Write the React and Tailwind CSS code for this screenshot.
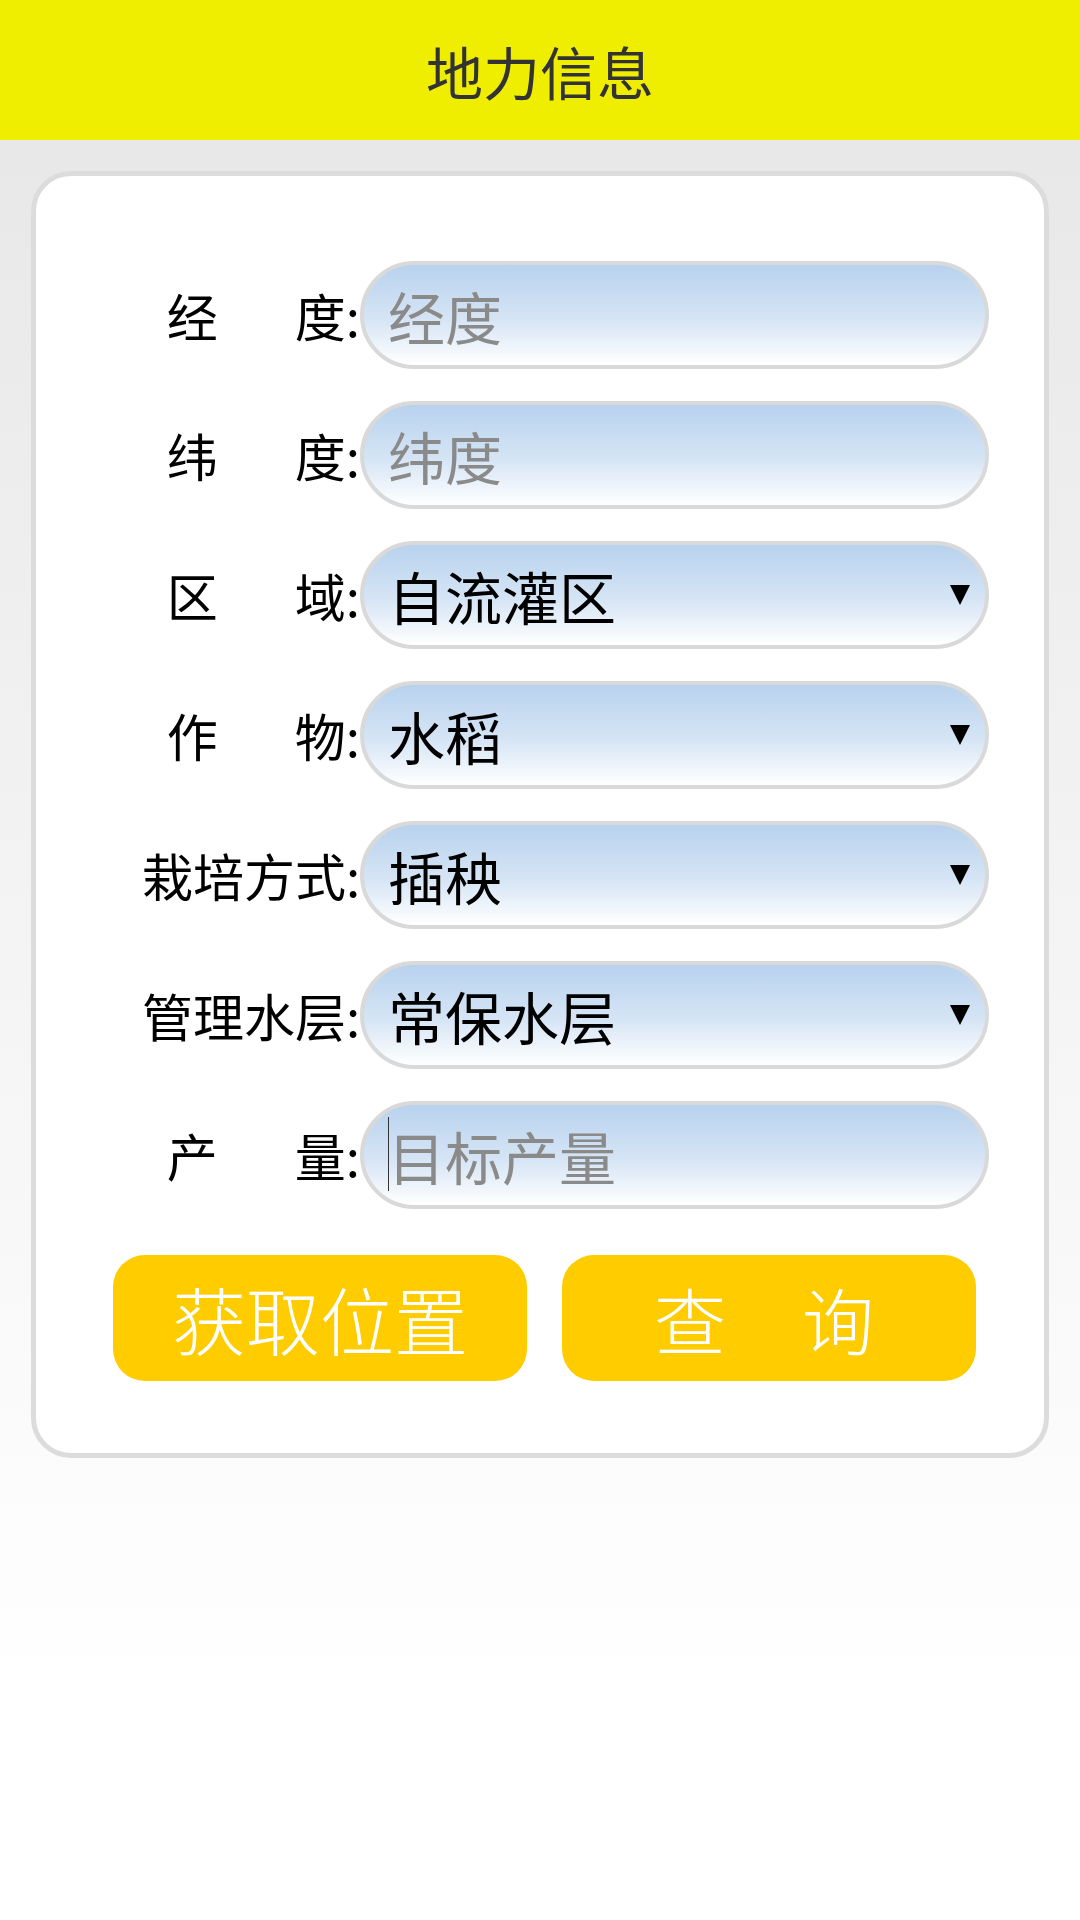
const rows = [
  { a: '经', b: '度', value: '经度', placeholder: true },
  { a: '纬', b: '度', value: '纬度', placeholder: true },
  { a: '区', b: '域', value: '自流灌区', select: true },
  { a: '作', b: '物', value: '水稻', select: true },
  { full: '栽培方式', value: '插秧', select: true },
  { full: '管理水层', value: '常保水层', select: true },
  { a: '产', b: '量', value: '目标产量', placeholder: true, caret: true },
]

function Arrow() {
  return (
    <svg width="20" height="22" viewBox="0 0 20 22" className="absolute right-[15px] top-1/2 -translate-y-1/2">
      <path d="M0 1 L20 1 L10 21 Z" fill="#000" />
    </svg>
  )
}

function Row({ row }) {
  return (
    <div className="flex items-center pl-[106px]">
      <div className="w-[218px] shrink-0 text-right text-[51px] leading-none text-black whitespace-nowrap">
        {row.full ? (
          <span>{row.full}:</span>
        ) : (
          <>
            <span>{row.a}</span>
            <span className="inline-block w-[77px]"></span>
            <span>{row.b}:</span>
          </>
        )}
      </div>
      <div className="relative flex h-[108px] w-[629px] items-center rounded-full border-[4px] border-[#d9d9d9] bg-[linear-gradient(180deg,#b8d2ee_0%,#d6e5f5_55%,#ffffff_100%)] pl-[24px]">
        {row.caret && <span className="absolute left-[24px] top-[12px] h-[74px] w-[1px] bg-[#333]"></span>}
        <span className={row.placeholder ? 'text-[57px] leading-none text-[#8a8a8a]' : 'text-[57px] leading-none text-black'}>
          {row.value}
        </span>
        {row.select && <Arrow />}
      </div>
    </div>
  )
}

export default function App() {
  return (
    <div
      className="min-h-[1920px] w-[1080px] bg-[linear-gradient(180deg,#e8e8e8_0px,#e8e8e8_140px,#f9f9f9_1300px,#ffffff_1700px)]"
      style={{ fontFamily: '"Noto Sans CJK SC", "Noto Sans", sans-serif' }}
    >
      <header className="flex h-[140px] items-center justify-center bg-[#efee00]">
        <h1 className="text-[57px] leading-none text-[#333]">地力信息</h1>
      </header>

      <div className="mx-[31px] mt-[31px] rounded-[40px] border-[5px] border-[#dcdcdc] bg-white pt-[85px] pb-[72px]">
        <div className="flex flex-col gap-[32px]">
          {rows.map((row, i) => (
            <Row key={i} row={row} />
          ))}
        </div>

        <div className="mt-[46px] flex gap-[35px] pl-[77px]">
          <button className="flex h-[126px] w-[414px] items-center justify-center rounded-[32px] bg-[#ffcc00] text-[74px] font-light leading-none text-white">
            获取位置
          </button>
          <button className="flex h-[126px] w-[414px] items-center justify-center rounded-[32px] bg-[#ffcc00] pr-[10px] text-[72px] font-light leading-none text-white">
            <span>查</span>
            <span className="inline-block w-[76px]"></span>
            <span>询</span>
          </button>
        </div>
      </div>
    </div>
  )
}
